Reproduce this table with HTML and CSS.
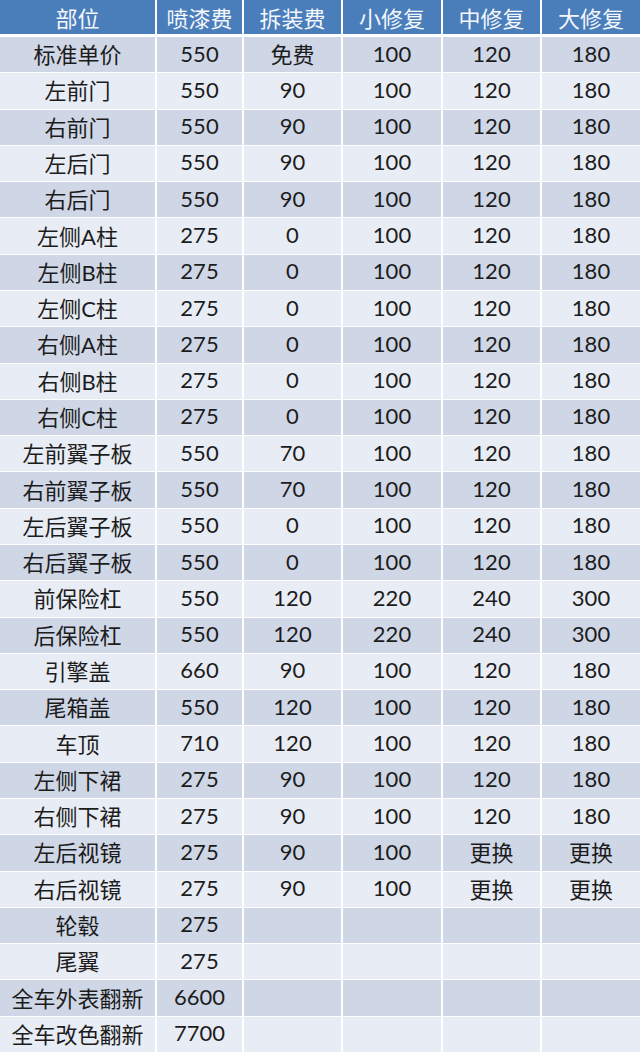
FILE: index.html
```html
<!DOCTYPE html>
<html lang="zh-CN">
<head>
<meta charset="utf-8">
<title>价目表</title>
<link rel="stylesheet" href="styles.css">
</head>
<body>
<div class="sheet">
  <div class="row head"><div class="c">部位</div><div class="c">喷漆费</div><div class="c">拆装费</div><div class="c">小修复</div><div class="c">中修复</div><div class="c">大修复</div></div>
  <div class="row odd"><div class="c">标准单价</div><div class="c">550</div><div class="c">免费</div><div class="c">100</div><div class="c">120</div><div class="c">180</div></div>
  <div class="row"><div class="c">左前门</div><div class="c">550</div><div class="c">90</div><div class="c">100</div><div class="c">120</div><div class="c">180</div></div>
  <div class="row odd"><div class="c">右前门</div><div class="c">550</div><div class="c">90</div><div class="c">100</div><div class="c">120</div><div class="c">180</div></div>
  <div class="row"><div class="c">左后门</div><div class="c">550</div><div class="c">90</div><div class="c">100</div><div class="c">120</div><div class="c">180</div></div>
  <div class="row odd"><div class="c">右后门</div><div class="c">550</div><div class="c">90</div><div class="c">100</div><div class="c">120</div><div class="c">180</div></div>
  <div class="row"><div class="c">左侧A柱</div><div class="c">275</div><div class="c">0</div><div class="c">100</div><div class="c">120</div><div class="c">180</div></div>
  <div class="row odd"><div class="c">左侧B柱</div><div class="c">275</div><div class="c">0</div><div class="c">100</div><div class="c">120</div><div class="c">180</div></div>
  <div class="row"><div class="c">左侧C柱</div><div class="c">275</div><div class="c">0</div><div class="c">100</div><div class="c">120</div><div class="c">180</div></div>
  <div class="row odd"><div class="c">右侧A柱</div><div class="c">275</div><div class="c">0</div><div class="c">100</div><div class="c">120</div><div class="c">180</div></div>
  <div class="row"><div class="c">右侧B柱</div><div class="c">275</div><div class="c">0</div><div class="c">100</div><div class="c">120</div><div class="c">180</div></div>
  <div class="row odd"><div class="c">右侧C柱</div><div class="c">275</div><div class="c">0</div><div class="c">100</div><div class="c">120</div><div class="c">180</div></div>
  <div class="row"><div class="c">左前翼子板</div><div class="c">550</div><div class="c">70</div><div class="c">100</div><div class="c">120</div><div class="c">180</div></div>
  <div class="row odd"><div class="c">右前翼子板</div><div class="c">550</div><div class="c">70</div><div class="c">100</div><div class="c">120</div><div class="c">180</div></div>
  <div class="row"><div class="c">左后翼子板</div><div class="c">550</div><div class="c">0</div><div class="c">100</div><div class="c">120</div><div class="c">180</div></div>
  <div class="row odd"><div class="c">右后翼子板</div><div class="c">550</div><div class="c">0</div><div class="c">100</div><div class="c">120</div><div class="c">180</div></div>
  <div class="row"><div class="c">前保险杠</div><div class="c">550</div><div class="c">120</div><div class="c">220</div><div class="c">240</div><div class="c">300</div></div>
  <div class="row odd"><div class="c">后保险杠</div><div class="c">550</div><div class="c">120</div><div class="c">220</div><div class="c">240</div><div class="c">300</div></div>
  <div class="row"><div class="c">引擎盖</div><div class="c">660</div><div class="c">90</div><div class="c">100</div><div class="c">120</div><div class="c">180</div></div>
  <div class="row odd"><div class="c">尾箱盖</div><div class="c">550</div><div class="c">120</div><div class="c">100</div><div class="c">120</div><div class="c">180</div></div>
  <div class="row"><div class="c">车顶</div><div class="c">710</div><div class="c">120</div><div class="c">100</div><div class="c">120</div><div class="c">180</div></div>
  <div class="row odd"><div class="c">左侧下裙</div><div class="c">275</div><div class="c">90</div><div class="c">100</div><div class="c">120</div><div class="c">180</div></div>
  <div class="row"><div class="c">右侧下裙</div><div class="c">275</div><div class="c">90</div><div class="c">100</div><div class="c">120</div><div class="c">180</div></div>
  <div class="row odd"><div class="c">左后视镜</div><div class="c">275</div><div class="c">90</div><div class="c">100</div><div class="c">更换</div><div class="c">更换</div></div>
  <div class="row"><div class="c">右后视镜</div><div class="c">275</div><div class="c">90</div><div class="c">100</div><div class="c">更换</div><div class="c">更换</div></div>
  <div class="row odd"><div class="c">轮毂</div><div class="c">275</div><div class="c"></div><div class="c"></div><div class="c"></div><div class="c"></div></div>
  <div class="row"><div class="c">尾翼</div><div class="c">275</div><div class="c"></div><div class="c"></div><div class="c"></div><div class="c"></div></div>
  <div class="row odd"><div class="c">全车外表翻新</div><div class="c">6600</div><div class="c"></div><div class="c"></div><div class="c"></div><div class="c"></div></div>
  <div class="row"><div class="c">全车改色翻新</div><div class="c">7700</div><div class="c"></div><div class="c"></div><div class="c"></div><div class="c"></div></div>
</div>
</body>
</html>
```

FILE: styles.css
```css
html, body {
  margin: 0;
  padding: 0;
  background: #ffffff;
}
.sheet {
  width: 640px;
  height: 1052px;
  display: grid;
  grid-template-rows: 36px repeat(28, 1fr);
  row-gap: 1px;
  background: #ffffff;
  font-family: Lato, "Noto Sans CJK SC", sans-serif;
  font-size: 22px;
  color: #1c1c1c;
}
.row {
  display: grid;
  grid-template-columns: 155px 85px 97px 98px 97px 98px;
  column-gap: 2px;
}
.c {
  display: flex;
  align-items: center;
  justify-content: center;
  padding-bottom: 3px;
  background: #e8ecf4;
  white-space: nowrap;
}
.row.odd .c {
  background: #cfd7e7;
}
.row.head .c {
  background: #4a7ebb;
  color: #f4f7fb;
  border-bottom: 2px solid #ffffff;
  padding-bottom: 1px;
  font-size: 22px;
}
```
